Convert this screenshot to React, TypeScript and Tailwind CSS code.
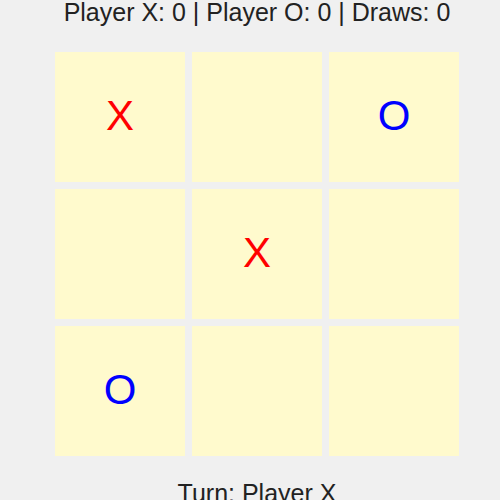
// Tic-tac-toe board with score line and turn indicator

const board = ['X', '', 'O', '', 'X', '', 'O', '', ''];

export default function App() {
  return (
    <div className="min-h-screen bg-[#f0f0f0] pl-[14px] flex flex-col items-center font-['Liberation_Sans',Arial,sans-serif] text-[#222]">
      <div className="text-[25px] leading-none">Player X: 0 | Player O: 0 | Draws: 0</div>

      <div className="mt-[27px] grid grid-cols-[repeat(3,130px)] gap-[7px]">
        {board.map((cell, i) => (
          <div
            key={i}
            className={`h-[130px] bg-[#fffacd] flex items-center justify-center pb-[4px] text-[42px] ${
              cell === 'X' ? 'text-[#ff0000]' : 'text-[#0000ff]'
            }`}
          >
            {cell}
          </div>
        ))}
      </div>

      <div className="mt-[25px] text-[25px] leading-none">Turn: Player X</div>
    </div>
  );
}
